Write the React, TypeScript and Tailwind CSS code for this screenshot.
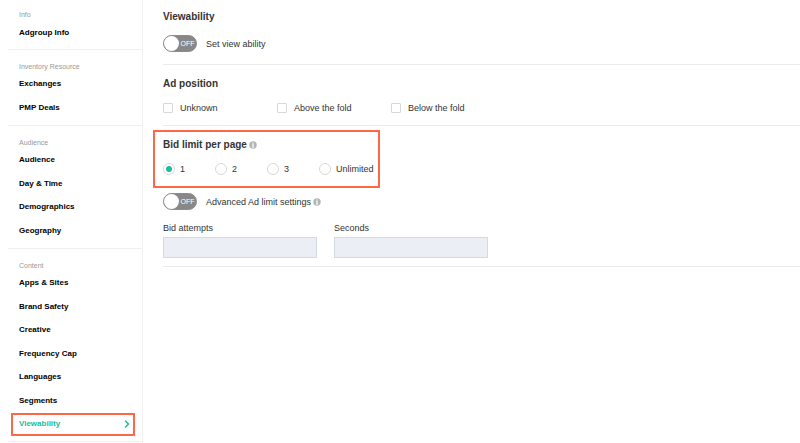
import React, { useState } from 'react';
import { ChevronRight } from 'lucide-react';

interface NavSection {
  title: string;
  items: string[];
  className: string;
}

const sections: NavSection[] = [
  { title: 'Info', items: ['Adgroup Info'], className: 'grow-1 pt-[9px] pb-1' },
  { title: 'Inventory Resource', items: ['Exchanges', 'PMP Deals'], className: 'grow-2 pt-[11px] pb-[5px]' },
  {
    title: 'Audience',
    items: ['Audience', 'Day & Time', 'Demographics', 'Geography'],
    className: 'grow-4 pt-[11px] pb-[5px]',
  },
  {
    title: 'Content',
    items: ['Apps & Sites', 'Brand Safety', 'Creative', 'Frequency Cap', 'Languages', 'Segments', 'Viewability'],
    className: 'grow-7 pt-[11px] pb-[5px]',
  },
];

const positions = ['Unknown', 'Above the fold', 'Below the fold'];
const limits = ['1', '2', '3', 'Unlimited'];

function InfoIcon() {
  return (
    <svg viewBox="0 0 14 14" className="size-2 shrink-0" aria-hidden="true">
      <circle cx="7" cy="7" r="6.5" fill="#b4b4b4" />
      <path d="M5.2 5.8h2.9v4.2h.9v1.2H5.1V10h.9V7h-.8zM5.9 2.6h2.2v2.1H5.9z" fill="#fff" />
    </svg>
  );
}

function Toggle({ label, info }: { label: string; info?: boolean }) {
  const [on, setOn] = useState(false);

  return (
    <label className="flex w-fit items-center">
      <input type="checkbox" role="switch" className="peer sr-only" checked={on} onChange={() => setOn(!on)} />
      <span
        className={`flex h-[17px] w-[34px] items-center rounded-full border text-[7px] leading-none font-medium text-white peer-focus-visible:ring-2 ${
          on ? 'flex-row-reverse border-[#1abc9c] bg-[#1abc9c]' : 'border-[#8c8c8c] bg-[#888]'
        }`}
      >
        <span className="size-[15px] shrink-0 rounded-full bg-white" />
        <span className="flex-1 text-center">{on ? 'ON' : 'OFF'}</span>
      </span>
      <span className="ml-[9px]">{label}</span>
      {info && <span className="ml-[2px]"><InfoIcon /></span>}
    </label>
  );
}

function Sidebar() {
  return (
    <nav className="flex min-h-screen w-[143px] shrink-0 flex-col border-r border-[#f0f0f0] pb-px pl-2">
      {sections.map((section) => (
        <section key={section.title} className={`flex flex-col border-b border-[#f0f0f0] ${section.className}`}>
          <h3 className="pl-[11px] text-[7px] leading-3 text-[#999]">{section.title}</h3>
          <ul className="flex flex-1 flex-col">
            {section.items.map((item) => {
              const active = item === 'Viewability';
              return (
                <li key={item} className="flex min-h-[23px] flex-1 items-center">
                  <a
                    href="#"
                    aria-current={active ? 'page' : undefined}
                    className={`mr-[7px] ml-[3px] flex h-[23px] flex-1 items-center justify-between border-2 pr-[3px] pl-[6px] text-[8px] font-bold ${
                      active ? 'border-[#ff6847] text-[#1abc9c]' : 'border-transparent text-black'
                    }`}
                  >
                    {item}
                    {active && <ChevronRight className="-mr-[3px] size-3" strokeWidth={3} />}
                  </a>
                </li>
              );
            })}
          </ul>
        </section>
      ))}
    </nav>
  );
}

export default function App() {
  const [limit, setLimit] = useState('1');

  return (
    <div className="flex min-h-screen bg-white font-['Liberation_Sans',sans-serif] text-[9px] leading-3 text-[#333]">
      <Sidebar />

      <main className="min-w-0 flex-1 pl-5">
        <section className="border-b border-[#ebebeb] pt-[11px] pb-3">
          <h2 className="mb-3 text-[10px] font-bold">Viewability</h2>
          <Toggle label="Set view ability" />
        </section>

        <section className="border-b border-[#ebebeb] pt-[13px] pb-[11px]">
          <h2 className="mb-3 text-[10px] font-bold">Ad position</h2>
          <div className="flex">
            {positions.map((position) => (
              <label key={position} className="flex w-[114px] items-center gap-[7px]">
                <input
                  type="checkbox"
                  className="size-[10px] appearance-none rounded-[1px] border border-[#d8d8d8] checked:bg-[#1abc9c]"
                />
                {position}
              </label>
            ))}
          </div>
        </section>

        <section className="border-b border-[#ebebeb] pt-1 pb-2">
          {/* Bid limit */}
          <div
            role="radiogroup"
            aria-labelledby="bid-limit-title"
            className="-ml-[10px] w-fit border-2 border-[#ff6847] pt-[7px] pr-1 pb-[11px] pl-2"
          >
            <h2 id="bid-limit-title" className="mb-3 flex items-center gap-[2px] text-[10px] font-bold">
              Bid limit per page
              <InfoIcon />
            </h2>
            <div className="flex gap-[30px]">
              {limits.map((value) => (
                <label key={value} className="flex items-center gap-[5px]">
                  <input
                    type="radio"
                    name="bid-limit"
                    value={value}
                    checked={limit === value}
                    onChange={() => setLimit(value)}
                    className="size-3 appearance-none rounded-full border border-[#d8d8d8] bg-white bg-clip-content p-[2px] checked:bg-[#1abc9c]"
                  />
                  {value}
                </label>
              ))}
            </div>
          </div>

          <div className="mt-[5px] mb-3">
            <Toggle label="Advanced Ad limit settings" info />
          </div>

          <div className="flex gap-[17px]">
            {['Bid attempts', 'Seconds'].map((name) => (
              <label key={name} className="flex w-[154px] flex-col gap-[3px]">
                {name}
                <input type="text" disabled className="h-[21px] w-full border border-[#d3dae3] bg-[#ebeff5] px-2" />
              </label>
            ))}
          </div>
        </section>
      </main>
    </div>
  );
}
